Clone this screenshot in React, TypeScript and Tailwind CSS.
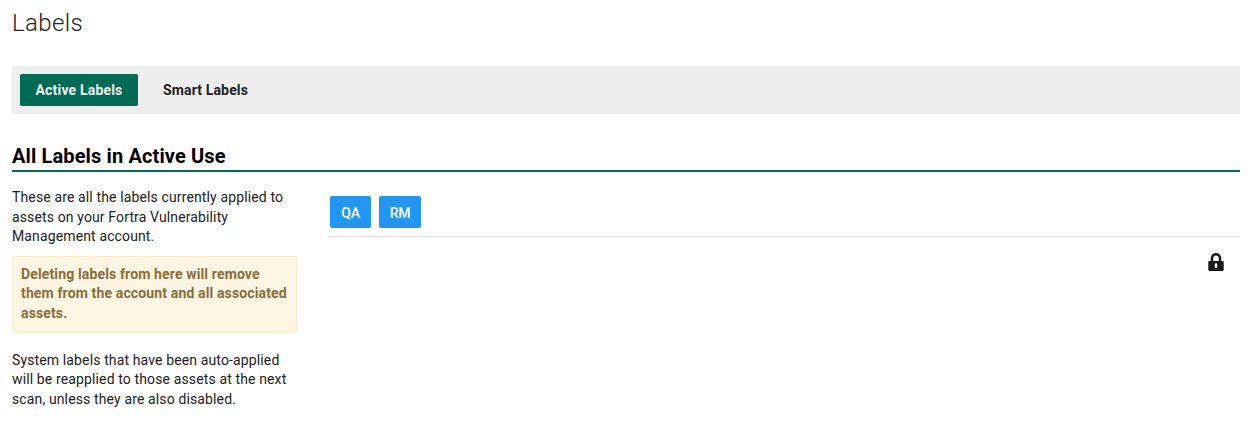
import React from "react";

function Lock() {
  return (
    <svg width="16" height="18" viewBox="0 0 16 18" aria-hidden="true">
      <path
        fillRule="evenodd"
        fill="#1a1a1a"
        d="M2.700 8V5.500C2.700 2.400 5 0 8 0s5.300 2.400 5.300 5.500V8h1.300c.5 0 1.100.5 1.100 1v7.800c0 .6-.6 1.200-1.100 1.200H1.400C.9 18 .3 17.400.3 16.800V9c0-.5.6-1 1.100-1h1.300zm2.500 0h5.600V5.500C10.800 3.800 9.600 2.500 8 2.500S5.200 3.800 5.200 5.500V8zM8 10.200a1.200 1.200 0 0 0-1.200 1.200v2.400a1.200 1.200 0 0 0 2.400 0v-2.400A1.200 1.200 0 0 0 8 10.200z"
      />
    </svg>
  );
}

export default function App() {
  return (
    <div className="min-h-[424px] bg-white pl-3 pr-[11px] pt-[9px] font-['Roboto',sans-serif] text-sm leading-[19.6px] tracking-[0.13px] text-[#212121]">
      <h1 className="text-2xl leading-[29px] font-light tracking-[0.35px] text-[#212121]">Labels</h1>

      <nav className="mt-[28px] flex h-12 items-center gap-[8px] bg-[#eeeeee] px-2">
        <button className="h-8 w-[118px] rounded-[2px] bg-[#006b54] pb-[1px] text-sm font-bold tracking-[0.18px] text-[#f0f0f0]">Active Labels</button>
        <button className="h-8 pl-[17px] pr-4 pb-[1px] text-sm font-bold tracking-[0.14px] text-[#212121]">Smart Labels</button>
      </nav>

      <h2 className="mt-[30px] border-b-2 border-[#006b54] pb-[2px] text-xl leading-6 font-bold tracking-[0.13px] text-black">
        All Labels in Active Use
      </h2>

      <div className="mt-[16px] flex">
        <aside className="w-[285px] shrink-0">
          <p>These are all the labels currently applied to assets on your Fortra Vulnerability Management account.</p>
          <div className="mt-[9px] rounded-[2px] border border-[#faebcc] bg-[#fdf6e3] p-2 font-bold tracking-[0.14px] text-[#8a6d3b]">
            Deleting labels from here will remove them from the account and all associated assets.
          </div>
          <p className="mt-[18px]">System labels that have been auto-applied will be reapplied to those assets at the next scan, unless they are also disabled.</p>
        </aside>

        <section className="ml-[31px] flex-1">
          <div className="flex gap-2 border-b border-[#e0e0e0] pb-2 pl-[2px] pt-2">
            <button className="h-8 w-[41px] rounded-[2px] bg-[#2196f3] pt-[1px] text-sm font-medium tracking-[-0.3px] text-white">QA</button>
            <button className="h-8 w-[42px] rounded-[2px] bg-[#2196f3] pt-[1px] text-sm font-medium tracking-[-0.3px] text-white">RM</button>
          </div>
          <div className="flex justify-end pr-4 pt-4">
            <Lock />
          </div>
        </section>
      </div>
    </div>
  );
}
